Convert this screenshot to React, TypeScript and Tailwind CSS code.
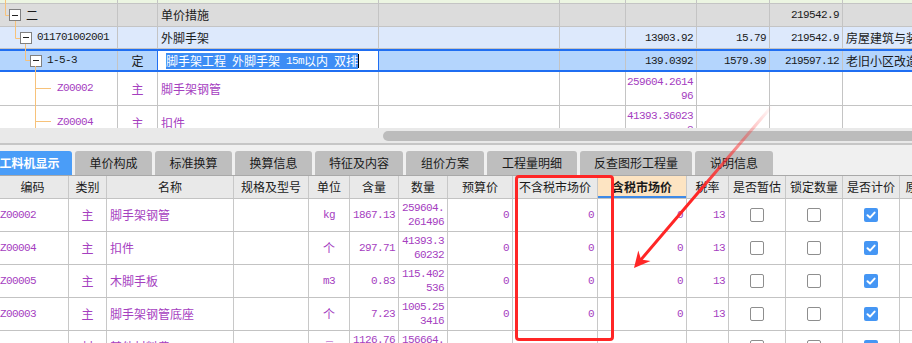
import React from 'react';

// column widths of the upper (分部分项) grid
const TOP_W = [
  'w-[118px]',
  'w-[40px]',
  'w-[221px]',
  'w-[181px]',
  'w-[66px]',
  'w-[71px]',
  'w-[73px]',
  'w-[73px]',
  'w-[160px]',
];

// column widths of the lower (工料机) grid
const BOT_COLS = [
  { w: 'w-[72px]', title: '编码' },
  { w: 'w-[38px]', title: '类别' },
  { w: 'w-[127px]', title: '名称' },
  { w: 'w-[75px]', title: '规格及型号' },
  { w: 'w-[41px]', title: '单位' },
  { w: 'w-[49px]', title: '含量' },
  { w: 'w-[49px]', title: '数量' },
  { w: 'w-[65px]', title: '预算价' },
  { w: 'w-[85px]', title: '不含税市场价' },
  { w: 'w-[89px]', title: '含税市场价' },
  { w: 'w-[42px]', title: '税率' },
  { w: 'w-[57px]', title: '是否暂估' },
  { w: 'w-[57px]', title: '锁定数量' },
  { w: 'w-[57px]', title: '是否计价' },
  { w: 'w-[60px]', title: '原始含量' },
];

const MONO = "font-['Liberation_Mono',monospace] text-[11px] tracking-[-0.6px]";
const PURPLE = 'text-[#a540bf]';

interface CellDef {
  c?: React.ReactNode;
  cls?: string;
  bc?: string;
}

function TopRow({ cells, className, border }: { cells: CellDef[]; className: string; border?: string }) {
  return (
    <div className={`flex shrink-0 ${border ?? 'border-b border-[#c4c4c4]'} ${className}`}>
      {cells.map((cell, i) => (
        <div
          key={i}
          className={`${TOP_W[i]} shrink-0 h-full flex items-center overflow-hidden whitespace-nowrap border-r ${cell.bc ?? 'border-[#c4c4c4]'} ${cell.cls ?? ''}`}
        >
          {cell.c}
        </div>
      ))}
    </div>
  );
}

function Expander() {
  return (
    <span className="w-[12px] h-[12px] border border-[#808080] bg-white flex items-center justify-center shrink-0">
      <span className="w-[6px] h-px bg-[#222]" />
    </span>
  );
}

function Num({ lines, className = '' }: { lines: string[]; className?: string }) {
  return (
    <div className={`w-full flex flex-col items-end pr-[3px] leading-[14px] ${MONO} ${className}`}>
      {lines.map((l) => (
        <span key={l}>{l}</span>
      ))}
    </div>
  );
}

function Checkbox({ checked }: { checked?: boolean }) {
  if (checked) {
    return (
      <span className="w-[14px] h-[14px] rounded-[2px] bg-[#4596f4] flex items-center justify-center">
        <svg width="14" height="14" viewBox="0 0 14 14">
          <path d="M3.5 7.3 L6 9.6 L10.6 4.6" fill="none" stroke="white" strokeWidth="2" strokeLinecap="round" strokeLinejoin="round" />
        </svg>
      </span>
    );
  }
  return <span className="w-[14px] h-[14px] rounded-[2px] border-[1.5px] border-[#8e8e8e] bg-white" />;
}

const TABS = [
  { label: '单价构成', w: 'w-[77px]' },
  { label: '标准换算', w: 'w-[77px]' },
  { label: '换算信息', w: 'w-[77px]' },
  { label: '特征及内容', w: 'w-[88px]' },
  { label: '组价方案', w: 'w-[78px]' },
  { label: '工程量明细', w: 'w-[90px]' },
  { label: '反查图形工程量', w: 'w-[112px]' },
  { label: '说明信息', w: 'w-[78px]' },
];

interface Item {
  code: string;
  kind: string;
  name: string;
  unit: string;
  qty: string[];
  amount: string[];
}

const ITEMS: Item[] = [
  { code: 'Z00002', kind: '主', name: '脚手架钢管', unit: 'kg', qty: ['1867.13'], amount: ['259604.', '261496'] },
  { code: 'Z00004', kind: '主', name: '扣件', unit: '个', qty: ['297.71'], amount: ['41393.3', '60232'] },
  { code: 'Z00005', kind: '主', name: '木脚手板', unit: 'm3', qty: ['0.83'], amount: ['115.402', '536'] },
  { code: 'Z00003', kind: '主', name: '脚手架钢管底座', unit: '个', qty: ['7.23'], amount: ['1005.25', '3416'] },
  { code: 'CLFTZ', kind: '材', name: '其他材料费', unit: '元', qty: ['1126.76', '27'], amount: ['156664.', '5092'] },
];

export default function App() {
  return (
    <div className="relative w-[912px] h-[343px] overflow-hidden bg-white font-['Noto_Sans_CJK_SC',sans-serif] text-[12px] text-[#1a1a1a]">
      {/* upper grid */}
      <div className="relative h-[128px] overflow-hidden flex flex-col">
        <TopRow className="h-[4px] bg-[#ecf5e2]" cells={TOP_W.map(() => ({}))} />
        <TopRow
          className="h-[23px] bg-[#dcdcdc]"
          cells={[
            { c: <><Expander /><span>二</span></>, cls: 'pl-[9px] gap-[5px]' },
            {},
            { c: '单价措施', cls: 'pl-[3px]' },
            {},
            {},
            {},
            {},
            { c: <Num lines={['219542.9']} /> },
            {},
          ]}
        />
        <TopRow
          className="h-[22px] bg-[#dde9fc]"
          cells={[
            { c: <><Expander /><span className={MONO}>011701002001</span></>, cls: 'pl-[20px] gap-[5px]' },
            {},
            { c: '外脚手架', cls: 'pl-[3px]' },
            {},
            {},
            { c: <Num lines={['13903.92']} /> },
            { c: <Num lines={['15.79']} /> },
            { c: <Num lines={['219542.9']} /> },
            { c: '房屋建筑与装饰工程', cls: 'pl-[3px]' },
          ]}
        />
        <TopRow
          className="h-[23px] bg-[#b4d5fd]"
          border="border-y-2 border-[#1f6ef2]"
          cells={[
            { c: <><Expander /><span className={MONO}>1-5-3</span></>, cls: 'pl-[30px] gap-[5px]' },
            { c: '定', cls: 'justify-center', bc: 'border-[#1f6ef2]' },
            {
              c: (
                <>
                  <span className="bg-[#3d8df5] text-white h-[16px] leading-[16px] flex items-center whitespace-pre">
                    <span>脚手架工程</span>
                    <span className={MONO}> </span>
                    <span>外脚手架</span>
                    <span className={MONO}> 15m</span>
                    <span>以内</span>
                    <span className={MONO}> </span>
                    <span>双排</span>
                  </span>
                  <span className="w-px h-[14px] bg-black" />
                </>
              ),
              cls: 'bg-white pl-[8px]',
              bc: 'border-[#1f6ef2]',
            },
            {},
            {},
            { c: <Num lines={['139.0392']} /> },
            { c: <Num lines={['1579.39']} /> },
            { c: <Num lines={['219597.12']} /> },
            { c: '老旧小区改造工程', cls: 'pl-[3px]' },
          ]}
        />
        <TopRow
          className={`h-[34px] ${PURPLE}`}
          cells={[
            { c: <span className={MONO}>Z00002</span>, cls: 'pl-[57px]' },
            { c: '主', cls: 'justify-center' },
            { c: '脚手架钢管', cls: 'pl-[3px]' },
            {},
            {},
            { c: <Num lines={['259604.2614', '96']} /> },
            {},
            {},
            {},
          ]}
        />
        <TopRow
          className={`h-[34px] ${PURPLE}`}
          cells={[
            { c: <span className={MONO}>Z00004</span>, cls: 'pl-[57px]' },
            { c: '主', cls: 'justify-center' },
            { c: '扣件', cls: 'pl-[3px]' },
            {},
            {},
            { c: <Num lines={['41393.36023', '3']} /> },
            {},
            {},
            {},
          ]}
        />
        {/* tree connectors */}
        <svg className="absolute left-0 top-0 pointer-events-none" width="118" height="128">
          <g stroke="#f7c27a" strokeWidth="1" fill="none">
            <path d="M5.5 0 V15.5 H9" />
            <path d="M15.5 21 V38.5 H20" />
            <path d="M25.5 44 V60.5 H30" />
            <path d="M35.5 66 V128" />
            <path d="M35.5 88.5 H51" />
            <path d="M35.5 121.5 H51" />
          </g>
        </svg>
      </div>

      {/* horizontal scrollbar */}
      <div className="h-[17px] bg-[#e9e9e9] border-b-2 border-[#c6c6c6] pt-[3px]">
        <div className="ml-[383px] h-[10px] w-[560px] rounded-full bg-[#bcbcbc]" />
      </div>

      {/* tabs */}
      <div className="h-[30px] bg-[#f0f0f0] pt-[6px] flex gap-[3px]">
        <div className="-ml-[13px] w-[85px] h-[24px] rounded-t-[3px] bg-[#4a9df8] text-white font-bold flex items-center justify-center">
          工料机显示
        </div>
        {TABS.map((t) => (
          <div
            key={t.label}
            className={`${t.w} h-[24px] rounded-t-[3px] bg-[#bebebe] text-[#1a1a1a] flex items-center justify-center`}
          >
            {t.label}
          </div>
        ))}
      </div>

      {/* lower grid */}
      <div className="-ml-[3px] w-[963px] flex flex-col">
        <div className="flex h-[24px] border-t border-[#a9a9a9] border-b border-b-[#c3c3c3] bg-[#e9e9e9]">
          {BOT_COLS.map((col, i) => (
            <div
              key={col.title}
              className={`${col.w} shrink-0 h-full flex items-center justify-center overflow-hidden whitespace-nowrap border-r border-[#c8c8c8] ${
                i === 9 ? 'bg-[#fde4c2] font-bold shadow-[inset_0_-2px_0_#3d8ae8]' : ''
              }`}
            >
              {col.title}
            </div>
          ))}
        </div>
        {ITEMS.map((it) => {
          const cells: React.ReactNode[] = [
            <span className={`pl-[3px] ${MONO}`}>{it.code}</span>,
            <span className="w-full text-center">{it.kind}</span>,
            <span className="pl-[3px]">{it.name}</span>,
            null,
            <span className={`w-full text-center ${it.unit === '个' ? '' : MONO}`}>{it.unit}</span>,
            <Num lines={it.qty} />,
            <Num lines={it.amount} />,
            <Num lines={['0']} />,
            <Num lines={['0']} />,
            <Num lines={['0']} />,
            <Num lines={['13']} />,
            <span className="w-full flex justify-center"><Checkbox /></span>,
            <span className="w-full flex justify-center"><Checkbox /></span>,
            <span className="w-full flex justify-center"><Checkbox checked /></span>,
            null,
          ];
          return (
            <div key={it.code} className={`flex h-[33px] shrink-0 border-b border-[#c3c3c3] ${PURPLE}`}>
              {BOT_COLS.map((col, i) => (
                <div
                  key={col.title}
                  className={`${col.w} shrink-0 h-full flex items-center overflow-hidden whitespace-nowrap border-r border-[#c8c8c8]`}
                >
                  {cells[i]}
                </div>
              ))}
            </div>
          );
        })}
      </div>

      {/* annotation: red box */}
      <div className="absolute left-[515px] top-[175px] w-[99px] h-[166px] border-[3px] border-[#ff2626] rounded-[4px] pointer-events-none" />

      {/* annotation: red arrow */}
      <svg className="absolute left-0 top-0 pointer-events-none" width="912" height="343">
        <defs>
          <linearGradient id="arrowFade" gradientUnits="userSpaceOnUse" x1="772" y1="106" x2="700" y2="190">
            <stop offset="0" stopColor="#ff2626" stopOpacity="0" />
            <stop offset="1" stopColor="#ff2626" stopOpacity="1" />
          </linearGradient>
        </defs>
        <line x1="772" y1="106" x2="641" y2="259.6" stroke="url(#arrowFade)" strokeWidth="3" strokeLinecap="round" />
        <path d="M634 268 L638.3 250.6 L641.1 259.6 L650.5 261 Z" fill="#ff2626" />
      </svg>
    </div>
  );
}
